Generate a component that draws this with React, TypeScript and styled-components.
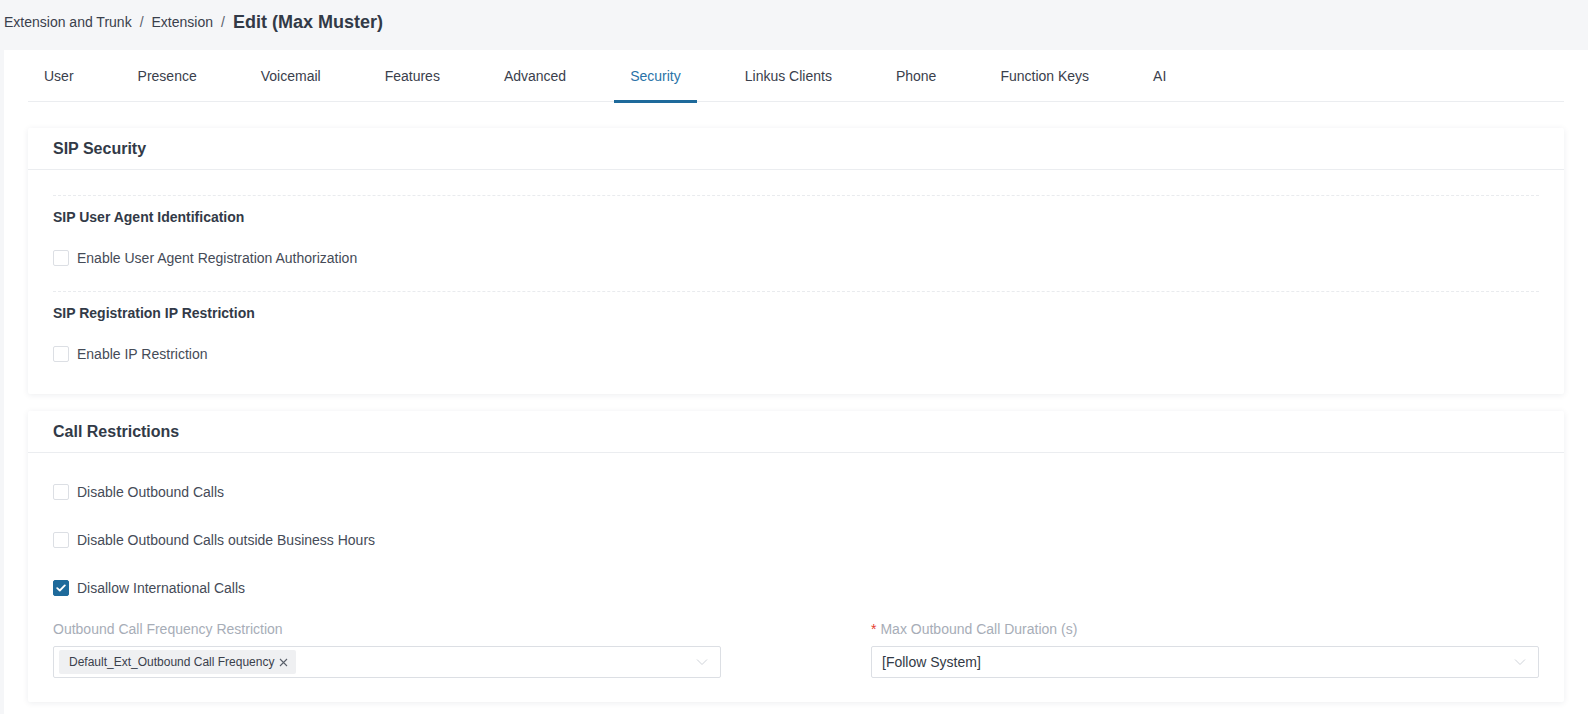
import styled, { createGlobalStyle } from "styled-components";

const GlobalStyle = createGlobalStyle`
  html, body {
    margin: 0;
    padding: 0;
    background: #f5f6f8;
    font-family: "Liberation Sans", Arial, sans-serif;
    color: #3a404c;
  }
`;

/* ---------- breadcrumb ---------- */

const Crumbs = styled.div`
  height: 50px;
  display: flex;
  align-items: center;
  padding: 0 0 6px 4px;
  box-sizing: border-box;
  font-size: 14px;
  color: #3a404c;
`;

const Sep = styled.span`
  margin: 0 8px;
  color: #5a606b;
`;

const CrumbTitle = styled.span`
  font-size: 18px;
  font-weight: 700;
  color: #323a47;
`;

/* ---------- main panel ---------- */

const Panel = styled.main`
  margin-left: 4px;
  background: #fff;
  padding: 0 24px 24px;
`;

const TabBar = styled.nav`
  display: flex;
  height: 51px;
  border-bottom: 1px solid #ebedf0;
`;

const Tab = styled.div<{ $active?: boolean }>`
  position: relative;
  display: flex;
  align-items: center;
  padding: 0 16px;
  margin-right: 32px;
  font-size: 14px;
  color: ${({ $active }) => ($active ? "#2a73a8" : "#3a404c")};
  cursor: pointer;

  &::after {
    content: "";
    position: absolute;
    left: 0;
    right: 0;
    bottom: -2px;
    height: 3px;
    background: ${({ $active }) => ($active ? "#1e6a9b" : "transparent")};
  }
`;

/* ---------- cards ---------- */

const Card = styled.section`
  margin-top: 26px;
  background: #fff;
  box-shadow: 0 1px 6px rgba(30, 40, 60, 0.08);
  border-radius: 2px;

  & + & {
    margin-top: 17px;
  }
`;

const CardHead = styled.header`
  height: 41px;
  display: flex;
  align-items: center;
  padding: 0 25px;
  border-bottom: 1px solid #ebedf0;
  font-size: 16px;
  font-weight: 700;
  color: #323a47;
`;

const CardBody = styled.div<{ $top: number; $bottom: number }>`
  padding: ${({ $top, $bottom }) => `${$top}px 25px ${$bottom}px`};
`;

const Group = styled.div`
  border-top: 1px dashed #e9ebee;
  padding-top: 11px;

  & + & {
    margin-top: 17px;
  }
`;

const GroupTitle = styled.div`
  height: 20px;
  line-height: 20px;
  font-size: 14px;
  font-weight: 700;
  color: #323a47;
  margin-bottom: 15px;
`;

const Rows = styled.div`
  display: flex;
  flex-direction: column;
  gap: 16px;
`;

const CheckRow = styled.label`
  height: 32px;
  display: flex;
  align-items: center;
  gap: 8px;
  font-size: 14px;
  color: #454b57;
  cursor: pointer;
`;

const Box = styled.span<{ $checked?: boolean }>`
  width: 16px;
  height: 16px;
  box-sizing: border-box;
  border-radius: 2px;
  border: 1px solid ${({ $checked }) => ($checked ? "#1e6a9b" : "#dcdfe4")};
  background: ${({ $checked }) => ($checked ? "#1e6a9b" : "#fff")};
  display: inline-flex;
  align-items: center;
  justify-content: center;
  flex-shrink: 0;
`;

function Checkbox({ checked, label }: { checked?: boolean; label: string }) {
  return (
    <CheckRow>
      <Box $checked={checked}>
        {checked && (
          <svg width="10" height="8" viewBox="0 0 10 8">
            <path
              d="M1.2 4.1 L3.8 6.5 L8.8 1.4"
              fill="none"
              stroke="#fff"
              strokeWidth="1.8"
              strokeLinecap="round"
              strokeLinejoin="round"
            />
          </svg>
        )}
      </Box>
      {label}
    </CheckRow>
  );
}

/* ---------- form fields ---------- */

const FieldGrid = styled.div`
  display: grid;
  grid-template-columns: 1fr 1fr;
  column-gap: 150px;
  margin-top: 15px;
`;

const FieldLabel = styled.div`
  height: 20px;
  line-height: 20px;
  font-size: 14px;
  color: #a7adb7;
  margin-bottom: 7px;
`;

const Required = styled.span`
  color: #e5402f;
  margin-right: 4px;
`;

const Select = styled.div`
  position: relative;
  height: 32px;
  box-sizing: border-box;
  border: 1px solid #dcdfe4;
  border-radius: 2px;
  display: flex;
  align-items: center;
  padding: 0 30px 0 5px;
  font-size: 14px;
  color: #333a45;
`;

const Value = styled.span`
  padding-left: 5px;
`;

const Tag = styled.span`
  height: 24px;
  display: inline-flex;
  align-items: center;
  gap: 5px;
  padding: 0 8px 0 10px;
  background: #eff0f2;
  border-radius: 2px;
  font-size: 12px;
  color: #3a404c;
`;

const Chevron = styled.svg`
  position: absolute;
  right: 12px;
  top: 50%;
  margin-top: -5px;
`;

function Arrow() {
  return (
    <Chevron width="12" height="10" viewBox="0 0 12 10">
      <path d="M1 2.5 L6 7.5 L11 2.5" fill="none" stroke="#cfd3d9" strokeWidth="1" />
    </Chevron>
  );
}

const tabs = [
  "User",
  "Presence",
  "Voicemail",
  "Features",
  "Advanced",
  "Security",
  "Linkus Clients",
  "Phone",
  "Function Keys",
  "AI",
];

export default function App() {
  return (
    <>
      <GlobalStyle />
      <Crumbs>
        <span>Extension and Trunk</span>
        <Sep>/</Sep>
        <span>Extension</span>
        <Sep>/</Sep>
        <CrumbTitle>Edit (Max Muster)</CrumbTitle>
      </Crumbs>

      <Panel>
        <TabBar>
          {tabs.map((t) => (
            <Tab key={t} $active={t === "Security"}>
              {t}
            </Tab>
          ))}
        </TabBar>

        <Card>
          <CardHead>SIP Security</CardHead>
          <CardBody $top={25} $bottom={24}>
            <Group>
              <GroupTitle>SIP User Agent Identification</GroupTitle>
              <Checkbox label="Enable User Agent Registration Authorization" />
            </Group>
            <Group>
              <GroupTitle>SIP Registration IP Restriction</GroupTitle>
              <Checkbox label="Enable IP Restriction" />
            </Group>
          </CardBody>
        </Card>

        <Card>
          <CardHead>Call Restrictions</CardHead>
          <CardBody $top={23} $bottom={24}>
            <Rows>
              <Checkbox label="Disable Outbound Calls" />
              <Checkbox label="Disable Outbound Calls outside Business Hours" />
              <Checkbox checked label="Disallow International Calls" />
            </Rows>
            <FieldGrid>
              <div>
                <FieldLabel>Outbound Call Frequency Restriction</FieldLabel>
                <Select>
                  <Tag>
                    Default_Ext_Outbound Call Frequency
                    <svg width="9" height="9" viewBox="0 0 9 9">
                      <path d="M1 1 L8 8 M8 1 L1 8" stroke="#5a606b" strokeWidth="1.1" />
                    </svg>
                  </Tag>
                  <Arrow />
                </Select>
              </div>
              <div>
                <FieldLabel>
                  <Required>*</Required>Max Outbound Call Duration (s)
                </FieldLabel>
                <Select>
                  <Value>[Follow System]</Value>
                  <Arrow />
                </Select>
              </div>
            </FieldGrid>
          </CardBody>
        </Card>
      </Panel>
    </>
  );
}
